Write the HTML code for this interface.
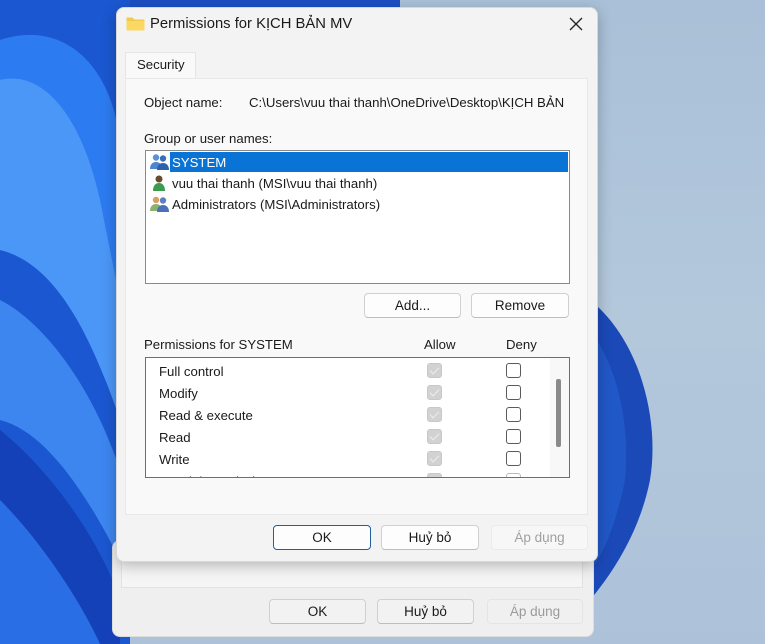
<!DOCTYPE html>
<html><head><meta charset="utf-8"><style>
*{margin:0;padding:0;box-sizing:border-box}
body{width:765px;height:644px;overflow:hidden;position:relative;font-family:"Liberation Sans",sans-serif;font-size:13.2px;color:#1a1a1a;background:linear-gradient(180deg,#a9c0d8,#b4c8dc 50%,#adc1d9)}
.a{position:absolute}
.btn{position:absolute;height:25px;border:1px solid #d0d0d0;border-bottom-color:#bdbdbd;border-radius:4px;background:#fdfdfd;text-align:center;line-height:23px;font-size:13.5px}
.cb{position:absolute;width:15px;height:15px;border-radius:3px}
.al{background:#d2d2d2;border:1px solid #c8c8c8}
.al:after{content:"";position:absolute;left:4px;top:1px;width:4px;height:8px;border:solid #eee;border-width:0 1.5px 1.5px 0;transform:rotate(45deg)}
.dn{border:1px solid #5a5a5a;background:#fff}
.t{position:absolute;white-space:nowrap}
</style></head><body>
<svg class="a" style="left:0;top:0" width="765" height="644">
<path d="M0 0 H130 V644 H0Z" fill="#1b57d0"/>
<path d="M0 40 C60 20 110 60 120 140 L120 420 C90 330 40 240 0 230Z" fill="#2d7bf0"/>
<path d="M0 80 C40 70 80 110 100 200 L120 300 L120 420 C80 300 40 260 0 250Z" fill="#4b97f7"/>
<path d="M0 300 C40 320 90 380 120 470 L120 560 C80 480 40 430 0 420Z" fill="#3d86f0"/>
<path d="M0 430 C50 470 100 540 120 600 L120 644 L0 644Z" fill="#1440b8"/>
<path d="M0 500 C40 540 80 600 100 644 L0 644Z" fill="#2a6ee6"/>
<path d="M130 0 H400 V10 H130Z" fill="#1d4fc4"/>
<path d="M590 300 C640 340 660 420 650 480 C640 530 615 570 590 600Z" fill="#1b49b8"/>
<path d="M590 330 C620 370 630 430 625 480 C615 530 600 560 590 570Z" fill="#2158c8"/>
</svg>
<div class="a" style="left:112px;top:540px;width:482px;height:97px;background:#efefef;border-radius:8px;border:1px solid #ddd"></div>
<div class="a" style="left:121px;top:555px;width:462px;height:33px;background:#f5f5f5;border:1px solid #e2e2e2"></div>
<div class="btn" style="left:269px;top:599px;width:97px;background:#f2f2f2">OK</div>
<div class="btn" style="left:377px;top:599px;width:97px;background:#f2f2f2">Huỷ bỏ</div>
<div class="btn" style="left:487px;top:599px;width:96px;background:#f0f0f0;color:#9a9a9a;border-color:#e4e4e4">Áp dụng</div>
<div class="a" style="left:116px;top:7px;width:482px;height:555px;background:#f3f3f3;border-radius:8px;border:1px solid #d8d8d8;box-shadow:0 4px 14px rgba(0,0,0,.25)"></div>
<svg class="a" style="left:126px;top:16px" width="19" height="16"><path d="M0.5 1.5h6l2 2h10v11h-18z" fill="#f3c94b"/><path d="M0.5 5h18v9.5h-18z" fill="#fbd763"/></svg>
<div class="t" style="left:150px;top:16px;font-size:14.8px">Permissions for KỊCH BẢN MV</div>
<svg class="a" style="left:569px;top:17px" width="14" height="14"><path d="M1 1L13 13M13 1L1 13" stroke="#222" stroke-width="1.3"/></svg>
<div class="a" style="left:125px;top:52px;width:71px;height:28px;background:#f9f9f9;border:1px solid #e5e5e5;border-bottom:none"></div>
<div class="t" style="left:137px;top:57px">Security</div>
<div class="a" style="left:125px;top:78px;width:463px;height:437px;background:#f9f9f9;border:1px solid #e8e8e8"></div>
<div class="t" style="left:144px;top:95px">Object name:</div>
<div class="t" style="left:249px;top:95px">C:\Users\vuu thai thanh\OneDrive\Desktop\KỊCH BẢN</div>
<div class="t" style="left:144px;top:131px">Group or user names:</div>
<div class="a" style="left:145px;top:150px;width:425px;height:134px;background:#fff;border:1px solid #8a8a8a"></div>
<div class="a" style="left:170px;top:152px;width:398px;height:20px;background:#0a74d6"></div>
<svg class="a" style="left:150px;top:153px" width="20" height="18"><circle cx="6" cy="4.5" r="3.2" fill="#5b8fd6"/><circle cx="13" cy="5.5" r="3.2" fill="#3a6fb8"/><path d="M0 16c0-5 3-7 6-7s6 2 6 7z" fill="#4f86d0"/><path d="M7 17c0-5 3-7 6-7s6 2 6 7z" fill="#2f62ad"/></svg>
<div class="t" style="left:172px;top:155px;color:#fff">SYSTEM</div>
<svg class="a" style="left:151px;top:174px" width="16" height="18"><circle cx="8" cy="5" r="3.5" fill="#6a4a2a"/><path d="M2 17c0-6 3-8 6-8s6 2 6 8z" fill="#3e9a4e"/></svg>
<div class="t" style="left:172px;top:176px">vuu thai thanh (MSI\vuu thai thanh)</div>
<svg class="a" style="left:150px;top:195px" width="20" height="18"><circle cx="6" cy="5" r="3.2" fill="#d8a060"/><circle cx="13" cy="5.5" r="3.2" fill="#5b7fc0"/><path d="M0 16c0-5 3-7 6-7s6 2 6 7z" fill="#8bb070"/><path d="M7 17c0-5 3-7 6-7s6 2 6 7z" fill="#4b6fb8"/></svg>
<div class="t" style="left:172px;top:197px">Administrators (MSI\Administrators)</div>
<div class="btn" style="left:364px;top:293px;width:97px">Add...</div>
<div class="btn" style="left:471px;top:293px;width:98px">Remove</div>
<div class="t" style="left:144px;top:337px">Permissions for SYSTEM</div>
<div class="t" style="left:424px;top:337px">Allow</div>
<div class="t" style="left:506px;top:337px">Deny</div>
<div class="a" style="left:145px;top:357px;width:425px;height:121px;background:#fff;border:1px solid #6e6e6e;overflow:hidden">
<div class="a" style="left:404px;top:0;width:19px;height:121px;background:#f8f8f8"></div>
<div class="a" style="left:410px;top:21px;width:5px;height:68px;background:#8a8a8a;border-radius:2px"></div>
<div class="t" style="left:13px;top:6px">Full control</div>
<div class="t" style="left:13px;top:28px">Modify</div>
<div class="t" style="left:13px;top:50px">Read &amp; execute</div>
<div class="t" style="left:13px;top:72px">Read</div>
<div class="t" style="left:13px;top:94px">Write</div>
<div class="t" style="left:13px;top:116px">Special permissions</div>
<div class="cb al" style="left:281px;top:5px"></div><div class="cb dn" style="left:360px;top:5px"></div>
<div class="cb al" style="left:281px;top:27px"></div><div class="cb dn" style="left:360px;top:27px"></div>
<div class="cb al" style="left:281px;top:49px"></div><div class="cb dn" style="left:360px;top:49px"></div>
<div class="cb al" style="left:281px;top:71px"></div><div class="cb dn" style="left:360px;top:71px"></div>
<div class="cb al" style="left:281px;top:93px"></div><div class="cb dn" style="left:360px;top:93px"></div>
<div class="cb al" style="left:281px;top:115px"></div><div class="cb dn" style="left:360px;top:115px;border-color:#bbb"></div>
</div>
<div class="btn" style="left:273px;top:525px;width:98px;border:1px solid #1f5f9f;line-height:23px">OK</div>
<div class="btn" style="left:381px;top:525px;width:98px">Huỷ bỏ</div>
<div class="btn" style="left:491px;top:525px;width:97px;background:#f7f7f7;color:#a0a0a0;border-color:#ebebeb">Áp dụng</div>
</body></html>
